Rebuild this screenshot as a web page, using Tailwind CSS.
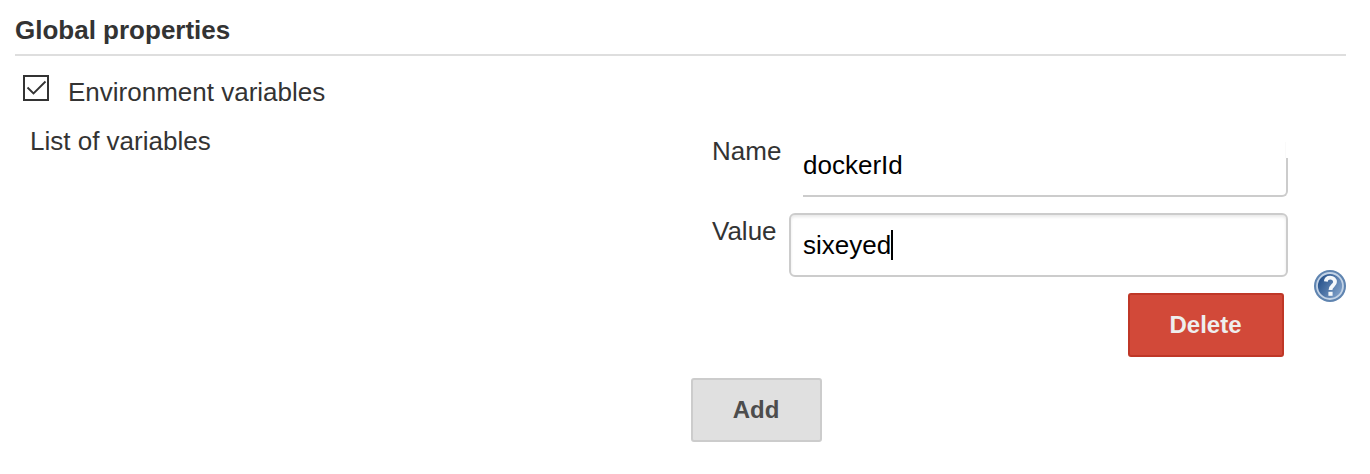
<!DOCTYPE html>
<html lang="en">
<head>
<meta charset="utf-8">
<title>Global properties</title>
<script src="https://cdn.jsdelivr.net/npm/@tailwindcss/browser@4"></script>
</head>
<body class="h-[474px] overflow-hidden bg-white pl-[15px] pr-6 pt-[15px] font-['Liberation_Sans',Arial,sans-serif] text-[26px] leading-[30px] text-[#333]">
<h1 class="h-[41px] border-b-2 border-[#dedede] font-bold">Global properties</h1>
<div class="flex pt-[19px] pl-2">
  <svg class="size-[26px] shrink-0" viewBox="0 0 26 26" fill="none" stroke="#333"><path d="M1 1H25V25H1Z" stroke-width="2"/><path d="M4.5 12.5L10.5 18.5L22.5 6.5" stroke-width="1.8"/></svg>
  <label class="mt-0.5 ml-[19px]">Environment variables</label>
</div>
<div class="flex">
  <div class="w-[676px] pt-[19px] pl-[15px]">List of variables</div>
  <div class="w-[597px] pt-[26px]">
    <div class="flex h-16 pl-[21px]">
      <label class="w-[91px] pt-[3px]">Name</label>
      <div class="flex flex-1 flex-col">
        <div class="ml-auto mt-[9px] mr-0.5 h-4 w-px bg-[#fafafa]"></div>
        <div class="h-[39px] rounded-br-md border-r-2 border-b-2 border-[#ccc]"><div class="-mt-2 text-black">dockerId</div></div>
      </div>
    </div>
    <div class="mt-4 flex h-16 pl-[21px]">
      <label class="w-[77px] pt-[3px]">Value</label>
      <div class="flex flex-1 rounded-md border-2 border-[#ccc] pt-[15px] pl-3 text-black shadow-[inset_0_2px_3px_rgba(0,0,0,0.09)]">sixeyed<span class="h-[30px] w-0.5 bg-black"></span></div>
    </div>
    <button class="mt-4 mr-1 ml-auto block h-16 w-[156px] rounded-[3px] border-2 border-[#bf3727] bg-[#d24939] pr-px text-2xl font-bold text-[#eee]">Delete</button>
    <button class="mt-[21px] block h-16 w-[131px] rounded-[3px] border-2 border-[#ccc] bg-[#e0e0e0] pr-px text-2xl font-bold text-[#4d4d4d]">Add</button>
  </div>
  <svg class="mt-[163px] ml-[26px] size-8 shrink-0" viewBox="0 0 32 32" fill="none">
    <defs><linearGradient id="blue" x1="0" y1="0.2" x2="1" y2="0.8"><stop stop-color="#1f4b86"/><stop offset="1" stop-color="#86a6cd"/></linearGradient></defs>
    <circle cx="16" cy="16" r="16" fill="#5f84b0"/>
    <circle cx="16" cy="16" r="13" fill="url(#blue)" stroke="#c3d3e6" stroke-width="1.8"/>
    <path d="M11.8 11.5C12 8.5 14 7.6 16.2 7.6C19.2 7.6 21 9.5 21 12C21 15.5 16.5 15.6 16.5 20" stroke="#f5f8fb" stroke-width="3.8"/>
    <path d="M14.4 21.8H18.6V25.8H14.4Z" fill="#f5f8fb"/>
  </svg>
</div>
</body>
</html>
